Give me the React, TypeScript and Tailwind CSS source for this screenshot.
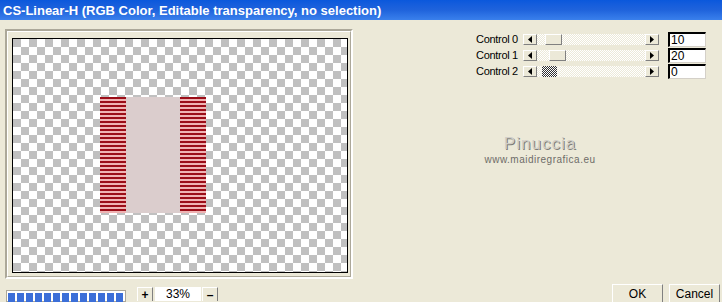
import React from 'react';

const checker =
  'bg-[conic-gradient(#ffffff_25%,#c0c0c0_0_50%,#ffffff_0_75%,#c0c0c0_0)] bg-[length:16px_16px]';
const stripes =
  'bg-[repeating-linear-gradient(to_bottom,#9b0d18_0px,#9b0d18_2px,#efb3b3_2px,#efb3b3_4px)]';
const dither =
  'bg-[conic-gradient(#ffffff_25%,#ece9d8_0_50%,#ffffff_0_75%,#ece9d8_0)] bg-[length:2px_2px]';
const darkDither =
  'bg-[conic-gradient(#333333_25%,#ffffff_0_50%,#333333_0_75%,#ffffff_0)] bg-[length:2px_2px]';

const ArrowButton: React.FC<{ dir: 'left' | 'right' }> = ({ dir }) => (
  <div className="w-[14px] h-[11px] bg-[#ece9d8] border-t border-l border-white border-r border-b border-r-[#808080] border-b-[#808080] flex items-center justify-center shrink-0">
    <svg width="4" height="7" viewBox="0 0 4 7">
      {dir === 'left' ? <path d="M4 0 L0 3.5 L4 7 Z" fill="#000" /> : <path d="M0 0 L4 3.5 L0 7 Z" fill="#000" />}
    </svg>
  </div>
);

const ControlRow: React.FC<{ label: string; value: string; thumb: number; dark?: boolean }> = ({
  label,
  value,
  thumb,
  dark,
}) => (
  <div className="flex items-center h-[16px]">
    <div className="w-[47px] text-[11px] leading-none text-black tracking-[-0.3px]">{label}</div>
    <div className="flex w-[136px] h-[11px]">
      <ArrowButton dir="left" />
      <div className={`flex-1 ${dither} flex items-stretch`}>
        {dark ? (
          <div className={`ml-[5px] w-[15px] ${darkDither}`} />
        ) : (
          <div
            className="w-[17px] bg-[#ece9d8] border-t border-l border-white border-r border-b border-r-[#808080] border-b-[#808080]"
            style={{ marginLeft: thumb }}
          />
        )}
      </div>
      <ArrowButton dir="right" />
    </div>
    <div className="ml-[9px] w-[38px] h-[15px] bg-white border-t-2 border-l-2 border-black border-r border-b border-r-[#d4d0c8] border-b-[#d4d0c8] text-[12px] leading-[12px] pl-[1px]">
      {value}
    </div>
  </div>
);

const App: React.FC = () => {
  return (
    <div className="w-[722px] h-[302px] bg-[#ece9d8] overflow-hidden font-['Liberation_Sans',sans-serif]">
      {/* Title bar */}
      <div className="h-[20px] bg-gradient-to-b from-[#0a58dc] via-[#1f63dc] to-[#3a80ec] flex items-center pl-[3px]">
        <span className="text-white font-bold text-[13px] tracking-[0px] leading-none">
          CS-Linear-H (RGB Color, Editable transparency, no selection)
        </span>
      </div>

      <div className="flex h-[282px]">
        {/* Preview side */}
        <div className="w-[360px] flex flex-col">
          <div className="ml-[5px] mt-[9px] w-[348px] h-[254px] border-2 border-t-[#aca899] border-l-[#aca899] border-r-white border-b-white">
            <div className="w-full h-full border border-t-white border-l-white border-r-[#aca899] border-b-[#aca899]">
              <div className={`ml-[4px] mt-[6px] w-[336px] h-[235px] border border-black ${checker}`}>
                <div className="ml-[87px] mt-[58px] w-[106px] h-[116px] flex">
                  <div className={`w-[26px] ${stripes}`} />
                  <div className="w-[54px] bg-[#dbcdcd]" />
                  <div className={`w-[26px] ${stripes}`} />
                </div>
              </div>
            </div>
          </div>

          {/* Bottom bar */}
          <div className="flex items-start mt-[8px]">
            <div className="ml-[6px] mt-[3px] w-[120px] h-[12px] border border-[#aca899] bg-white flex gap-[2px] pl-[1px] pt-[2px]">
              {Array.from({ length: 13 }).map((_, i) => (
                <div key={i} className="w-[7px] h-[10px] bg-[#3c6fd8]" />
              ))}
            </div>
            <div className="ml-[11px] flex h-[14px]">
              <div className="w-[16px] h-[14px] bg-[#ece9d8] border-t border-l border-white border-r border-r-[#808080] flex items-center justify-center text-[12px] font-bold leading-none">
                +
              </div>
              <div className="ml-[2px] w-[46px] h-[14px] bg-white text-[12px] leading-[14px] text-center">33%</div>
              <div className="ml-[1px] w-[16px] h-[14px] bg-[#ece9d8] border-t border-l border-white border-r border-r-[#808080] flex items-center justify-center text-[12px] font-bold leading-none">
                –
              </div>
            </div>
          </div>
        </div>

        {/* Controls side */}
        <div className="flex-1 flex flex-col">
          <div className="ml-[116px] mt-[11px]">
            <ControlRow label="Control 0" value="10" thumb={8} />
            <ControlRow label="Control 1" value="20" thumb={12} />
            <ControlRow label="Control 2" value="0" thumb={0} dark />
          </div>

          <div className="ml-[119px] mt-[55px] w-[122px] flex flex-col items-center">
            <div className="text-[17px] leading-[20px] text-[#d0cec8] tracking-[1px] [text-shadow:1px_1px_0_#7e7c76]">
              Pinuccia
            </div>
            <div className="text-[10px] leading-[11px] text-[#6e6c68] tracking-[0.5px]">www.maidiregrafica.eu</div>
          </div>

          <div className="mt-auto flex ml-[252px] gap-[6px] h-[18px] items-start">
            <div className="w-[51px] h-[23px] bg-[#ece9d8] border border-t-white border-l-white border-r-[#808080] border-b-[#808080] text-[12px] leading-[14px] text-center pt-[2px]">
              OK
            </div>
            <div className="w-[51px] h-[23px] bg-[#ece9d8] border border-t-white border-l-white border-r-[#808080] border-b-[#808080] text-[12px] leading-[14px] text-center pt-[2px]">
              Cancel
            </div>
          </div>
        </div>
      </div>
    </div>
  );
};

export default App;
